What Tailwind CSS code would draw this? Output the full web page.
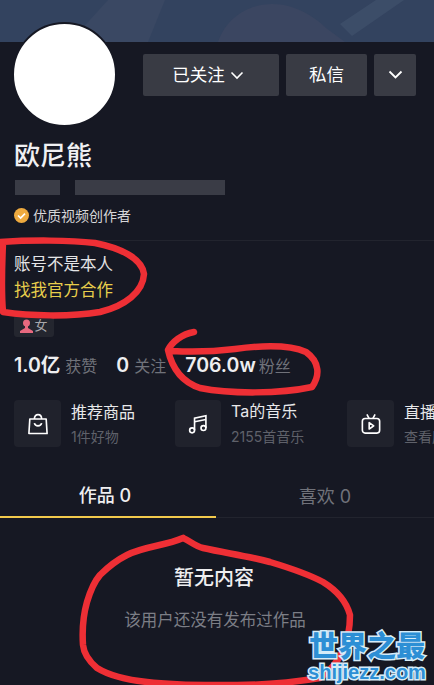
<!DOCTYPE html>
<html lang="zh-CN">
<head>
  <meta charset="UTF-8">
  <title>欧尼熊</title>
  <script src="https://cdn.jsdelivr.net/npm/@tailwindcss/browser@4"></script>
</head>
<body class="bg-[#161823]">
  <div class="relative w-[434px] h-[685px] overflow-hidden bg-[#161823] text-white font-['Inter','Noto_Sans_CJK_SC',sans-serif]">

    <!-- banner -->
    <div class="h-[42px] bg-[#33435f] overflow-hidden">
      <svg width="434" height="42" viewBox="0 0 434 42">
        <path d="M70 42 L108 0 H165 L148 42 Z" fill="#3a4863"/>
        <path d="M218 42 C228 14 252 4 272 4 C296 4 316 18 326 28 L345 42 Z" fill="#3b4661"/>
        <path d="M340 24 L376 0 H404 L352 36 Z" fill="#3c4d68"/>
      </svg>
    </div>

    <!-- avatar + actions -->
    <div class="flex items-start px-[14px] h-[84px]">
      <div class="w-[105px] h-[105px] -ml-[2px] -mt-[20px] shrink-0 rounded-full bg-white border-2 border-[#161823]"></div>
      <div class="flex gap-[7px] ml-[26px] mt-[12px]">
        <div class="w-[136px] h-[42px] pr-[6px] rounded-[2px] bg-[#393b44] flex items-center justify-center gap-[5px] text-[17.5px]">
          已关注
          <svg width="14" height="9" viewBox="0 0 14 9" fill="none" stroke="white" stroke-width="1.6"><path d="M1.5 1.5 L7 7 L12.5 1.5"/></svg>
        </div>
        <div class="w-[81px] h-[42px] rounded-[2px] bg-[#393b44] flex items-center justify-center text-[17.5px]">私信</div>
        <div class="w-[42px] h-[42px] rounded-[2px] bg-[#393b44] flex items-center justify-center">
          <svg width="15" height="10" viewBox="0 0 15 10" fill="none" stroke="white" stroke-width="1.8"><path d="M1.5 1.5 L7.5 7.5 L13.5 1.5"/></svg>
        </div>
      </div>
    </div>

    <!-- name -->
    <div class="px-[14px] mt-[12px] text-[26px] leading-[36px] font-medium text-[#f0f0f2]">欧尼熊</div>

    <!-- blurred id -->
    <div class="flex px-[15px] mt-[6px] gap-[15px]">
      <div class="w-[45px] h-[15px] bg-[#3a3c46] blur-[0.5px]"></div>
      <div class="w-[150px] h-[15px] bg-[#3a3c46] blur-[0.5px]"></div>
    </div>

    <!-- badge -->
    <div class="flex items-center gap-[4px] px-[14px] mt-[10px] h-[20px] text-[14px] text-[#d6d6d8]">
      <svg width="15" height="15" viewBox="0 0 15 15"><circle cx="7.5" cy="7.5" r="7.5" fill="#eeaa3f"/><path d="M4 7.5 L6.6 10 L11 5.6" fill="none" stroke="white" stroke-width="1.7"/></svg>
      优质视频创作者
    </div>

    <div class="mt-[15px] ml-[14px] h-px bg-white/5"></div>

    <!-- bio -->
    <div class="px-[14px] mt-[10px] text-[16.5px] leading-[26px]">
      <div class="text-[#e4e4e6]">账号不是本人</div>
      <div class="text-[#e8ce4c]">找我官方合作</div>
    </div>

    <!-- gender -->
    <div class="mx-[14px] mt-[12px] w-[40px] h-[22px] rounded-[3px] bg-[#24262f] flex items-center justify-center gap-[1px] text-[13px] text-[#a8a8ac]">
      <svg width="13" height="14" viewBox="0 0 13 14" fill="#e8697f"><circle cx="6.5" cy="4" r="3.5"/><path d="M5 7 h3 v2 l5 3 v2 H0 v-2 l5 -3 Z"/></svg>
      女
    </div>

    <!-- stats -->
    <div class="flex items-center px-[14px] mt-[15px] h-[28px]">
      <span class="text-[19.5px] font-semibold text-[#eeeef0]">1.0亿</span>
      <span class="ml-[5px] text-[16px] text-[#70727a]">获赞</span>
      <span class="ml-[19px] text-[19.5px] font-semibold text-[#eeeef0]">0</span>
      <span class="ml-[5px] text-[16px] text-[#70727a]">关注</span>
      <span class="ml-[19px] text-[19.5px] font-semibold text-[#eeeef0]">706.0w</span>
      <span class="ml-[3px] text-[16px] text-[#70727a]">粉丝</span>
    </div>

    <!-- shortcuts -->
    <div class="flex px-[14px] mt-[20px] h-[47px] whitespace-nowrap">
      <div class="flex w-[161px] shrink-0">
        <div class="w-[47px] h-[47px] rounded-[4px] bg-[#20222c] flex items-center justify-center shrink-0">
          <svg width="20" height="22" viewBox="0 0 22 24" fill="none" stroke="white" stroke-width="1.8"><path d="M2 6.5 H20 L21 22.5 H1 Z" stroke-linejoin="round"/><path d="M7 6.5 C7 0 15 0 15 6.5"/><path d="M7 11 C8 15 14 15 15 11"/></svg>
        </div>
        <div class="ml-[10px]">
          <div class="text-[16px] leading-[22px] mt-[1px] text-[#e8e8ea]">推荐商品</div>
          <div class="text-[14px] leading-[20px] mt-[4px] text-[#5f616a]">1件好物</div>
        </div>
      </div>
      <div class="flex w-[172px] shrink-0">
        <div class="w-[46px] h-[47px] rounded-[4px] bg-[#20222c] flex items-center justify-center shrink-0">
          <svg width="20" height="20" viewBox="0 0 22 22" fill="none" stroke="white" stroke-width="1.8"><circle cx="4.5" cy="18" r="2.7"/><circle cx="17" cy="15.5" r="2.7"/><path d="M7.2 18 V4.5 L19.7 2 V15.5"/><path d="M7.2 8.5 L19.7 6"/></svg>
        </div>
        <div class="ml-[10px]">
          <div class="text-[16px] leading-[22px] text-[#e8e8ea]">Ta的音乐</div>
          <div class="text-[14px] leading-[20px] mt-[5px] text-[#5f616a]">2155首音乐</div>
        </div>
      </div>
      <div class="flex shrink-0">
        <div class="w-[47px] h-[47px] rounded-[4px] bg-[#20222c] flex items-center justify-center shrink-0">
          <svg width="20" height="22" viewBox="0 0 22 24" fill="none" stroke="white" stroke-width="1.8"><rect x="1.5" y="6" width="19" height="16" rx="3"/><path d="M6.5 1.5 L9 6 M15.5 1.5 L13 6"/><path d="M9 10.5 L14 14 L9 17.5 Z" stroke-linejoin="round"/></svg>
        </div>
        <div class="ml-[10px]">
          <div class="text-[16px] leading-[22px] mt-[1px] text-[#e8e8ea]">直播动态</div>
          <div class="text-[14px] leading-[20px] mt-[4px] text-[#5f616a]">查看历史</div>
        </div>
      </div>
    </div>

    <!-- tabs -->
    <div class="flex mt-[28px] h-[43px] border-b border-white/5">
      <div class="w-[216px] pr-[6px] flex items-center justify-center border-b-[2px] border-[#f2c94c] h-[43px] text-[18px] text-[#eeeef0] font-medium">作品 0</div>
      <div class="w-[218px] flex items-center justify-center h-[43px] text-[18px] text-[#70727a]">喜欢 0</div>
    </div>

    <!-- empty state -->
    <div class="flex flex-col items-center">
      <div class="mt-[46px] -ml-[6px] text-[20px] leading-[28px] font-medium text-[#eeeef0]">暂无内容</div>
      <div class="mt-[16px] text-[16.5px] leading-[24px] text-[#7c7e86] -ml-[4px]">该用户还没有发布过作品</div>
    </div>

    <!-- red marker scribbles -->
    <svg class="absolute left-0 top-0 pointer-events-none" width="434" height="685" viewBox="0 0 434 685" fill="none" stroke="#ee2f35" stroke-width="6.5" stroke-linecap="round" stroke-linejoin="round">
      <path d="M0 242 C30 240 70 240 95 243 C120 248 142 258 144 274 C143 292 125 306 100 312 C70 317 30 316 3 312 C1 290 2 265 3 243"/>
      <path d="M194 332 C182 334 172 342 168 350 C172 368 182 382 200 388 C230 394 280 394 312 387 C320 376 320 362 306 352 C290 345 265 345 235 349 C210 352 190 352 172 351"/>
      <path d="M183 538 C165 546 145 546 127 555 C115 561 108 567 100 575 C93 583 90 592 87 602 C83 616 82 630 83 645 C84 655 90 662 97 668 C110 676 128 680 147 682 C180 686 210 685 237 685 C265 685 295 682 320 678 C338 665 350 645 350 615 C346 600 336 590 323 582 C308 574 290 568 270 562 C248 556 225 553 203 548 C195 546 190 541 183 538"/>
    </svg>

    <!-- watermark -->
    <div class="absolute left-[306px] top-[627px] w-[122px] text-center text-[#2d8fd5] font-bold [paint-order:stroke_fill] [-webkit-text-stroke:3px_#d6ecf8]">
      <div class="text-[29px] leading-[35px] font-['Noto_Sans_CJK_SC',sans-serif] font-black">世界之最</div>
      <div class="text-[20px] leading-[20px] font-['Liberation_Sans',sans-serif]">shijiezz.com</div>
    </div>
  </div>
</body>
</html>
